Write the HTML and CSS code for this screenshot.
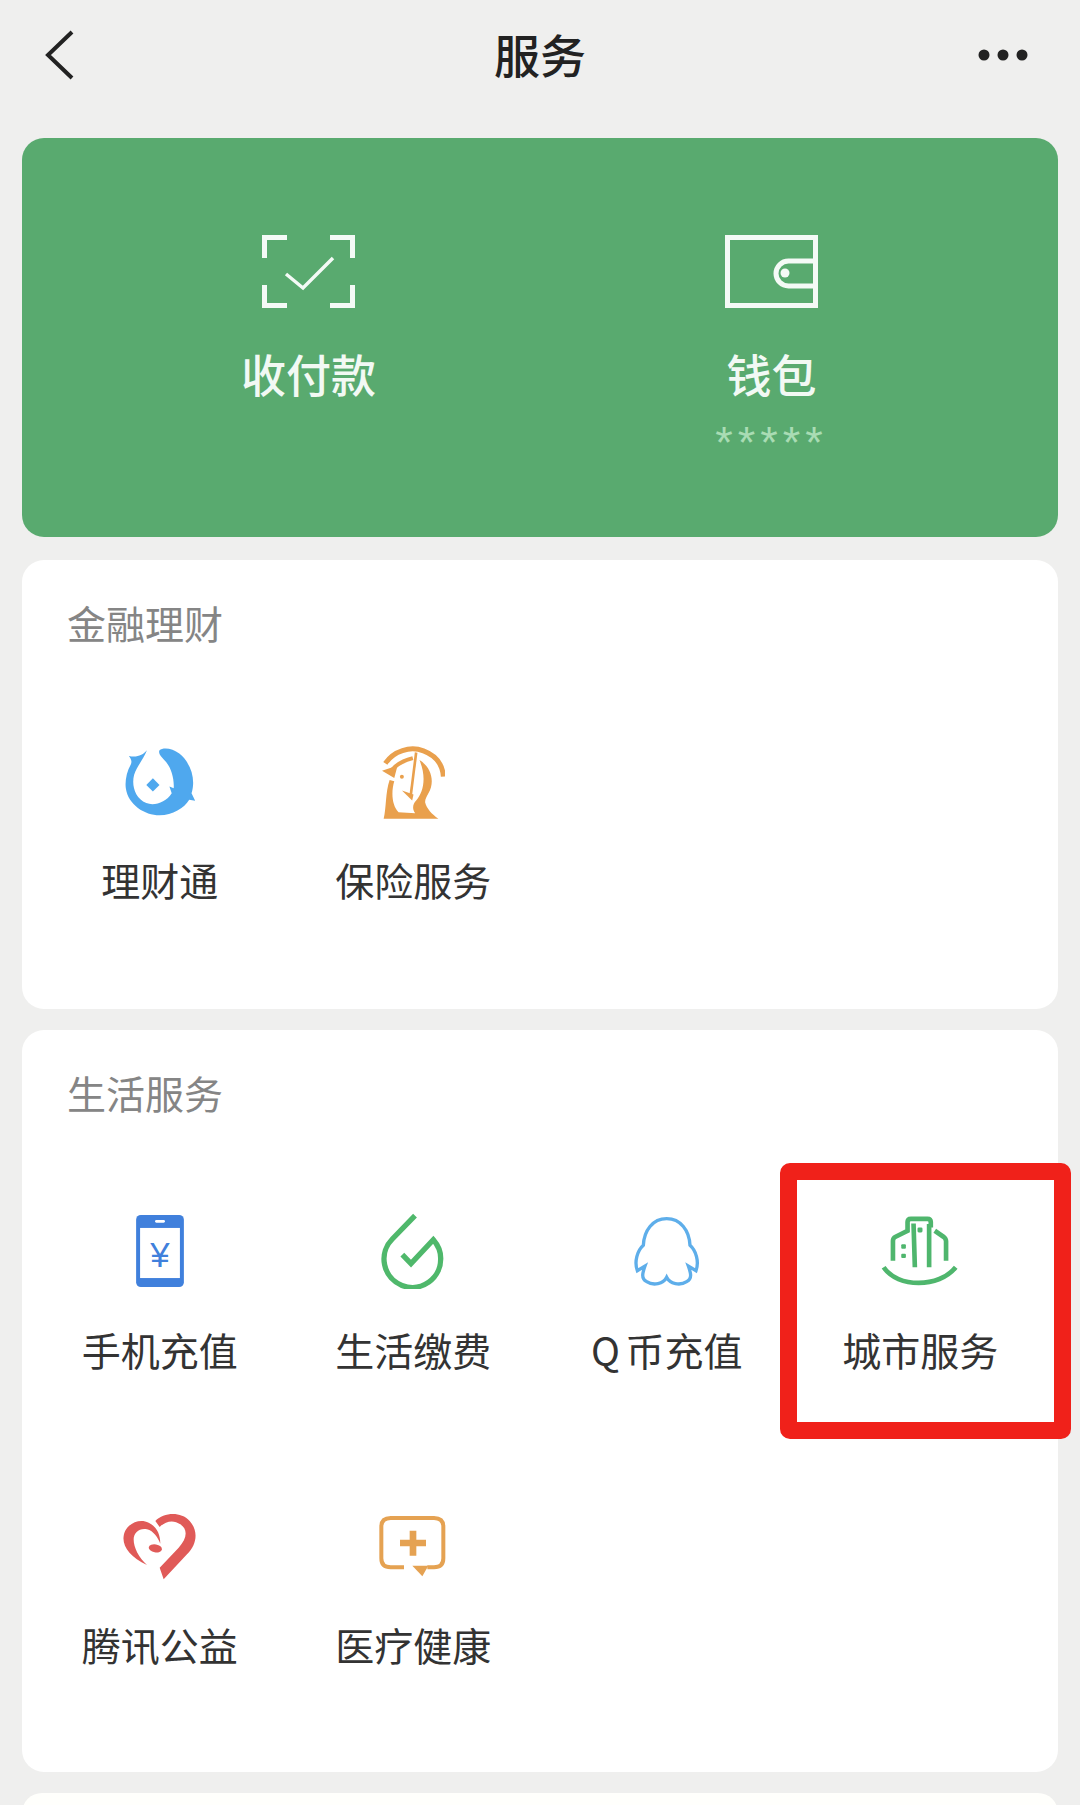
FILE: index.html
```html
<!DOCTYPE html>
<html lang="zh-CN">
<head>
    <meta charset="UTF-8">
    <meta name="viewport" content="width=device-width, initial-scale=1.0">
    <title>服务</title>
    <link rel="stylesheet" href="styles.css">
</head>
<body>

<div class="page">
    <div class="topbar">
        <div class="back">
            <svg width="30" height="50" viewBox="0 0 30 50"><polyline class="line-dark" points="27,2 3,25 27,48"/></svg>
        </div>
        <h1 class="title">服务</h1>
        <div class="more">
            <svg width="50" height="12" viewBox="0 0 50 12"><circle cx="6" cy="6" r="5.5"/><circle cx="25" cy="6" r="5.5"/><circle cx="44" cy="6" r="5.5"/></svg>
        </div>
    </div>

    <div class="hero">
        <div class="hero-item">
            <svg class="hero-icon" width="93" height="73" viewBox="0 0 93 73">
                <path class="line-white" d="M2.5 23V2.500H25M68 2.500H90.500V23M2.500 50V70.500H25M68 70.500H90.500V50"/>
                <polyline class="line-white thin" points="24,39 41,53 71,23"/>
            </svg>
            <div class="hero-label">收付款</div>
        </div>
        <div class="hero-item">
            <svg class="hero-icon" width="93" height="73" viewBox="0 0 93 73">
                <rect class="line-white" x="2.500" y="2.500" width="88" height="68"/>
                <path class="line-white" d="M91 26H63.500A12.500 12.500 0 0 0 63.500 51H91"/>
                <circle class="fill-white" cx="60" cy="38" r="4.500"/>
            </svg>
            <div class="hero-label">钱包</div>
            <div class="hero-stars">*****</div>
        </div>
    </div>

    <div class="card">
        <div class="card-title">金融理财</div>
        <div class="grid">
            <div class="cell">
                <div class="cell-icon">
                    <svg width="72" height="70" viewBox="28 22 217 212">
                        <path class="fill-blue" d="M97 35C85 50 65 58 42 52C50 62 52 70 48 78C35 100 30 130 33 150C40 200 90 232 135 232C175 232 210 210 225 185L243 188L232 165C245 125 232 75 195 45C175 28 145 25 135 35C130 45 140 55 150 65C170 85 180 120 178 150L165 145L172 165C155 192 120 205 95 195C60 180 50 140 58 110C65 85 85 65 97 35Z"/>
                        <path class="fill-blue" d="M115 120L135 140L115 160L95 140Z"/>
                    </svg>
                </div>
                <div class="cell-label">理财通</div>
            </div>
            <div class="cell">
                <div class="cell-icon">
                    <svg width="63" height="75" viewBox="25 20 190 225">
                        <path class="line-orange" d="M35 78C60 40 110 25 150 40C190 55 208 85 210 118"/>
                        <path class="line-orange narrow" d="M55 98C70 78 95 68 118 62"/>
                        <path class="fill-orange" d="M25 100L72 84L62 122Z"/>
                        <path class="line-orange slim" d="M128 45L112 172"/>
                        <path class="fill-orange" d="M85 160L120 172L116 190Z"/>
                        <path class="fill-orange" d="M138 68C175 90 185 135 165 168C160 178 155 185 155 195C160 215 175 230 195 245H30C38 215 35 165 48 128L62 132C52 165 55 205 75 225L125 228C115 215 118 200 128 190C150 165 160 120 138 68Z"/>
                        <circle class="fill-orange" cx="85" cy="118" r="6"/>
                    </svg>
                </div>
                <div class="cell-label">保险服务</div>
            </div>
        </div>
    </div>

    <div class="card card-wide">
        <div class="card-title">生活服务</div>
        <div class="grid">
            <div class="cell">
                <div class="cell-icon">
                    <svg width="48" height="72" viewBox="108 78 144 217">
                        <rect class="fill-phone" x="108" y="78" width="144" height="217" rx="14"/>
                        <rect class="fill-paper" x="120" y="117" width="120" height="151"/>
                        <rect class="fill-paper" x="165" y="93" width="30" height="8" rx="4"/>
                        <text class="yen" x="180" y="234" text-anchor="middle">¥</text>
                    </svg>
                </div>
                <div class="cell-label">手机充值</div>
            </div>
            <div class="cell">
                <div class="cell-icon">
                    <svg width="64" height="76" viewBox="848 70 192 228">
                        <path class="line-green" d="M950 78L882 148A85 85 0 1 0 1027 205C1027 185 1018 165 1005 150L938 222L912 195"/>
                    </svg>
                </div>
                <div class="cell-label">生活缴费</div>
            </div>
            <div class="cell">
                <div class="cell-icon">
                    <svg width="66" height="71" viewBox="102 168 198 213">
                        <path class="line-qq" d="M200 176C158 176 132 212 130 256C112 272 102 305 112 332L135 318C128 338 122 355 140 365C160 378 190 372 200 352C210 372 240 378 260 365C278 355 272 338 265 318L288 332C298 305 288 272 270 256C268 212 242 176 200 176Z"/>
                    </svg>
                </div>
                <div class="cell-label cell-label-q">Q 币充值</div>
            </div>
            <div class="cell">
                <div class="cell-icon">
                    <svg width="78" height="70" viewBox="20 18 235 210">
                        <path class="line-city" d="M28 172C70 235 195 235 245 172"/>
                        <path class="line-city" d="M56 152V92Q56 84 64 80L100 62V36Q100 26 110 26H160Q170 26 170 36V52"/>
                        <path class="line-city" d="M118 40L122 172M165 42V172"/>
                        <path class="line-city" d="M182 62L208 80Q216 86 216 94V152"/>
                        <rect class="fill-city" x="130" y="52" width="15" height="15" rx="4"/>
                        <rect class="fill-city" x="81" y="103" width="14" height="13" rx="3"/>
                        <rect class="fill-city" x="81" y="131" width="14" height="13" rx="3"/>
                    </svg>
                </div>
                <div class="cell-label">城市服务</div>
                <div class="highlight"></div>
            </div>
            <div class="cell">
                <div class="cell-icon">
                    <svg width="74" height="68" viewBox="68 73 222 204">
                        <path class="fill-heart" d="M165 100C190 75 240 70 268 100C295 130 290 170 260 200L190 275L178 240L235 180C262 150 262 125 240 110C220 95 195 100 178 118Z"/>
                        <path class="fill-heart" d="M140 232C90 210 65 175 70 145C75 110 115 90 145 105C170 118 180 140 180 168C172 150 160 130 140 125C118 120 100 135 100 155C100 180 115 210 140 232Z"/>
                        <ellipse class="fill-heart" cx="165" cy="182" rx="20" ry="12" transform="rotate(10 165 182)"/>
                    </svg>
                </div>
                <div class="cell-label">腾讯公益</div>
            </div>
            <div class="cell">
                <div class="cell-icon">
                    <svg width="68" height="62" viewBox="840 78 204 186">
                        <path class="line-med" d="M915 235H875Q847 235 847 208V113Q847 87 875 87H1005Q1033 87 1033 113V208Q1033 235 1005 235H985"/>
                        <path class="fill-med" d="M940 230H988L970 262Z"/>
                        <path class="line-med bold" d="M942 125V200M903 162H981"/>
                    </svg>
                </div>
                <div class="cell-label">医疗健康</div>
            </div>
        </div>
    </div>

    <div class="card card-next"></div>
</div>

</body>
</html>
```

FILE: styles.css
```css
* {
    box-sizing: border-box;
}
html, body {
    margin: 0;
    height: 1805px;
    overflow: hidden;
}
body {
    font-family: "Noto Sans CJK SC", "Noto Sans", sans-serif;
    background-color: #efefee;
    color: #333;
}
svg {
    display: block;
}

/* top bar */
.topbar {
    display: grid;
    grid-template-columns: 1fr auto 1fr;
    align-items: center;
    height: 110px;
    margin-bottom: 28px;
}
.back {
    justify-self: start;
    padding-left: 45px;
}
.more {
    justify-self: end;
    padding-right: 52px;
}
.more circle {
    fill: #222;
}
.title {
    margin: 0;
    padding-bottom: 4px;
    font-size: 46px;
    font-weight: 500;
    line-height: 60px;
    color: #222;
}

/* green card */
.hero {
    display: grid;
    grid-template-columns: 1fr 1fr;
    height: 399px;
    margin: 0 22px 23px;
    padding: 97px 55px 0;
    background-color: #59aa6f;
    border-radius: 22px;
}
.hero-item {
    display: flex;
    flex-direction: column;
    align-items: center;
}
.hero-label {
    margin-top: 38px;
    font-size: 45px;
    font-weight: 500;
    line-height: 56px;
    color: #f2f9f4;
}
.hero-stars {
    height: 30px;
    margin-top: 18px;
    font-family: "Liberation Sans", sans-serif;
    font-size: 45px;
    line-height: 46px;
    letter-spacing: 5px;
    color: #a9dcb4;
}

/* white cards */
.card {
    margin: 0 22px 21px;
    padding: 37px 11px 105px;
    background-color: #fff;
    border-radius: 22px;
}
.card-wide {
    padding-bottom: 103px;
}
.card-next {
    height: 40px;
    padding: 0;
    background-color: #fffffc;
}
.card-title {
    padding-left: 34px;
    font-size: 39px;
    line-height: 50px;
    color: #858585;
}
.grid {
    display: grid;
    grid-template-columns: repeat(4, 1fr);
    row-gap: 132px;
    margin-top: 94px;
}
.cell {
    position: relative;
    display: flex;
    flex-direction: column;
    align-items: center;
}
.cell-icon {
    display: flex;
    align-items: center;
    justify-content: center;
    height: 80px;
    margin-bottom: 33px;
}
.cell-label {
    font-size: 39px;
    line-height: 50px;
    color: #333;
    white-space: nowrap;
}
.cell-label-q {
    word-spacing: -3px;
}

/* red marker over the fourth service */
.highlight {
    position: absolute;
    top: -48px;
    right: -24px;
    bottom: -65px;
    left: -14px;
    border: 17px solid #f0211a;
    border-radius: 10px;
}

/* icon strokes and fills */
.line-dark, .line-white, .line-orange, .line-green, .line-qq, .line-city, .line-med {
    fill: none;
}
.line-dark {
    stroke: #222;
    stroke-width: 4;
}
.line-white {
    stroke: #f4faf6;
    stroke-width: 5;
}
.line-white.thin {
    stroke-width: 3.5;
}
.fill-white {
    fill: #f4faf6;
}
.fill-blue {
    fill: #4fa8ee;
}
.line-orange {
    stroke: #e9a04d;
    stroke-width: 15;
}
.line-orange.narrow {
    stroke-width: 12;
}
.line-orange.slim {
    stroke-width: 8;
}
.fill-orange {
    fill: #e9a04d;
}
.fill-phone {
    fill: #4080dc;
}
.fill-paper {
    fill: #fff;
}
.yen {
    font-family: "Liberation Sans", sans-serif;
    font-size: 105px;
    fill: #4080dc;
}
.line-green {
    stroke: #4fb86b;
    stroke-width: 16;
}
.line-qq {
    stroke: #5eaeea;
    stroke-width: 10;
}
.line-city {
    stroke: #4fb66d;
    stroke-width: 14;
}
.fill-city {
    fill: #4fb66d;
}
.fill-heart {
    fill: #e05a58;
}
.line-med {
    stroke: #e5a252;
    stroke-width: 12;
}
.line-med.bold {
    stroke-width: 20;
}
.fill-med {
    fill: #e5a252;
}
```
